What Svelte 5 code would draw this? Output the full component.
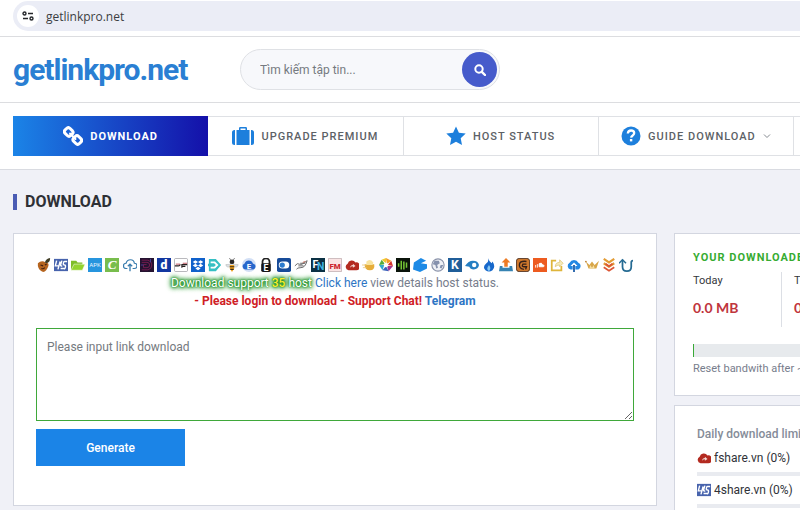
<script lang="ts">
  type Host = { name: string; art: string };

  const font = 'font-family="Roboto, sans-serif" text-anchor="middle"';

  const fshare =
    '<path d="M4 14a4 4 0 0 1-1-7.500a5 5 0 0 1 9-1.500a4.500 4.500 0 0 1 1 9z" fill="#b32a20"/><path d="M6 11q0-3 3-3V6.500l3 2.500l-3 2V9.500q-2 0-3 1.500z" fill="#f3d9d4"/>';
  const fourshare =
    '<path d="M0 1h16v14H0z" fill="#4763ad"/><path d="M3 3L1.500 9H6M7 4L4.500 13M9 3L7.500 8q0 1.500 2 1M15 4h-3q-1 0-1.300 2t1.300 2t1 2.500t-2 1.500H7.500" fill="none" stroke="#fff" stroke-width="1.600"/>';

  const hosts: Host[] = [
    {
      name: 'uploaded fruit',
      art: '<path d="M1 6q4-4 9-1q4 0 3 4q-2 6-6 7q-5-2-6-7z" fill="#b5641f"/><path d="M9 5q1-4 6-5q0 5-4 6z" fill="#3e3b24"/><path d="M4 8l3 1M9 8l2-1M5 12q2 1 4-1" stroke="#462110" stroke-width="1.300" fill="none"/>'
    },
    { name: '4share.vn', art: fourshare },
    {
      name: 'folder',
      art: '<path d="M0 14V3h6l1.500 2H13v2" fill="#7ebd28"/><path d="M0 14L3.500 7H16l-3 7z" fill="#93d32e" stroke="#fff" stroke-width=".6"/>'
    },
    {
      name: 'apk',
      art: `<path d="M0 0h16v16H0z" fill="#2695de"/><text x="8" y="10.500" font-size="7" fill="#e9f6ff" ${font}>APK</text>`
    },
    {
      name: 'clicknupload',
      art: `<path d="M0 0h16v16H0z" fill="#78bd4d"/><text x="8" y="13" font-size="15" font-style="italic" font-weight="700" fill="#fff" font-family="Liberation Serif, serif" text-anchor="middle">C</text>`
    },
    {
      name: 'cloud upload',
      art: '<path d="M5 12H3.500a3 3 0 0 1 0-6q1-4 5-4t4.500 4a3 3 0 0 1 0 6H11" fill="none" stroke="#397cae" stroke-width="1.400"/><path d="M8 15V7M5.500 9.500L8 7l2.500 2.500" fill="none" stroke="#397cae" stroke-width="1.500"/>'
    },
    {
      name: 'ddownload',
      art: '<path d="M0 0h16v16H0z" fill="#241331"/><path d="M2 2.500h7q4.500 1 4.500 5.500t-4.500 5.500H2M2 5h6q3 0 3 3t-3 3H4V7.500h3.500" fill="none" stroke="#7d1d52" stroke-width="1"/><path d="M12 1v4M1 8h3" stroke="#4c45a4"/>'
    },
    {
      name: 'dailyuploads',
      art: `<path d="M0 0h16v16H0z" fill="#1237a0"/><text x="8" y="13" font-size="14" font-weight="900" fill="#fff" ${font}>d</text>`
    },
    {
      name: 'depositfiles',
      art: '<rect x=".5" y=".5" width="15" height="15" rx="1.500" fill="#fff" stroke="#a9a9ae"/><path d="M1 9h4q2 0 2-2M9 11V7.500h6M9 9.500h4" fill="none" stroke="#292020" stroke-width="1.300"/><path d="M2 7h5M10 6h5" stroke="#b3414d"/>'
    },
    {
      name: 'dropbox',
      art: '<path d="M0 0h16v16H0z" fill="#1061cb"/><path d="M5 2.500l3 2l-3 2l-3-2zM11 2.500l3 2l-3 2l-3-2zM5 6.500l3 2l-3 2l-3-2zM11 6.500l3 2l-3 2l-3-2zM8 10l3 2l-3 2l-3-2z" fill="#fff"/>'
    },
    {
      name: 'drop download',
      art: '<path d="M1 1h8l6 7l-6 7H1V9.500H0V6.500h1z" fill="#36bfc3"/><path d="M3 4h5l4 4l-4 4H3v-2h4l2-2l-2-2H3z" fill="#fff"/>'
    },
    {
      name: 'bee',
      art: '<path d="M5 0l2 3M11 0L9 3" stroke="#777"/><circle cx="8" cy="4.500" r="2.700" fill="#292929"/><path d="M7.500 7L1 7.500q0 4 6 2.500M8.500 7L15 7.500q0 4-6 2.500" fill="#dce1e5" stroke="#aaa" stroke-width=".5"/><path d="M5.500 8h5v4L8 16l-2.500-4z" fill="#efa11e"/><path d="M5.500 10h5M6 13h4" stroke="#3a2c17" stroke-width="1.200"/>'
    },
    {
      name: 'elite cloud',
      art: `<circle cx="8" cy="8" r="8" fill="#d2dff5"/><path d="M4 13a3.500 3.500 0 0 1-1-6.800a5 5 0 0 1 9.500 0A3.500 3.500 0 0 1 13 13z" fill="#2767cc"/><text x="8" y="12" font-size="9" font-weight="700" fill="#fff" ${font}>E</text>`
    },
    {
      name: 'lock',
      art: `<path d="M4 8V4a4 3.500 0 0 1 8 0v4" fill="none" stroke="#222" stroke-width="2"/><rect x="2.500" y="6" width="11" height="10" rx="2" fill="#151515"/><text x="8" y="14.500" font-size="10" font-weight="700" fill="#fff" ${font}>E</text>`
    },
    {
      name: 'toggle',
      art: '<rect width="16" height="16" rx="2" fill="#174b99"/><rect x="2" y="4" width="12" height="8" rx="4" fill="#fff"/><circle cx="6" cy="8" r="3" fill="#2d7bce"/>'
    },
    {
      name: 'express',
      art: '<path d="M1 9q3-4 5-2t9-4q-2 8-7 8t-5 2M5 9h6M7 6h6" fill="none" stroke="#666" stroke-width="1.100"/><path d="M10 5l3-1" stroke="#b85240"/>'
    },
    {
      name: 'filenext',
      art: `<path d="M0 0h16v16H0z" fill="#0b3144"/><text x="5" y="11" font-size="12" font-weight="700" fill="#fff" ${font}>F</text><text x="11" y="14" font-size="12" font-weight="700" fill="#41b5e3" ${font}>N</text>`
    },
    {
      name: 'filemonster',
      art: `<path d="M.5 .5h15v15H.500z" fill="#fae4e4" stroke="#c5b2b5"/><text x="8" y="12" font-size="9" font-weight="900" fill="#cd2931" ${font}>FM</text>`
    },
    { name: 'fshare.vn', art: fshare },
    {
      name: 'bread',
      art: '<path d="M3 7h11q1 7-5 7t-6-7z" fill="#e6ad39"/><path d="M5 4q4-4 8 1l-1 3H5z" fill="#f8e4a0"/><path d="M0 8h5M1 11h4" stroke="#e9cc83"/>'
    },
    {
      name: 'colour wheel',
      art: '<path d="M8 0l6 3l-5 4z" fill="#f29a23"/><path d="M14 3l2 6l-6-1z" fill="#d7342d"/><path d="M16 9l-5 6l-2-6z" fill="#a4368f"/><path d="M11 15l-7-1l4-5z" fill="#3a62bb"/><path d="M4 14L0 8l6 0z" fill="#31a7d0"/><path d="M0 8l3-6l4 5z" fill="#54ad3d"/><path d="M3 2l5-2v6z" fill="#efc931"/><circle cx="8" cy="8" r="2.500" fill="#fff"/>'
    },
    {
      name: 'equaliser',
      art: '<path d="M0 0h16v16H0z" fill="#0b140b"/><path d="M3 6v4M6 3v10M9 4v9M12 5v6" stroke="#77c936" stroke-width="1.700"/>'
    },
    {
      name: 'blue box',
      art: '<path d="M1 5l8-5l6 3l-6 3l7 1v5l-8 4l-8-3z" fill="#1d8ae6"/>'
    },
    {
      name: 'globe',
      art: '<circle cx="8" cy="8" r="7" fill="#eef0f5" stroke="#8992a9" stroke-width="1.300"/><path d="M4 3l5 0l1 3l-3 2l1 3l-2 1l-1-4l-3-1zM11 8l3 0l-2 4l-2-1z" fill="#8591ad"/>'
    },
    {
      name: 'katfile',
      art: `<path d="M0 0h16v16H0z" fill="#205e99"/><text x="8" y="13" font-size="14" font-weight="700" fill="#fff" ${font}>K</text>`
    },
    {
      name: 'comet',
      art: '<path d="M0 9q4-6 9-6q6 0 7 5q-1 5-6 5q-4 0-5-3z" fill="#247ec2"/><circle cx="10.500" cy="8" r="2.500" fill="#fff"/>'
    },
    {
      name: 'flame',
      art: '<path d="M7 0q1 4 4 6l1-2q4 6 0 10q-4 3-8 0q-4-4 1-8q3-2 2-6z" fill="#1768cb"/><path d="M8 8q3 4 0 7q-4-2 0-7z" fill="#88c9f5"/>'
    },
    {
      name: 'upload tray',
      art: '<path d="M1 9h3v2h8V9h3l1 6H0z" fill="#3683b2"/><path d="M8 0l5 5h-3v5H6V5H3z" fill="#ed7b24"/>'
    },
    {
      name: 'spiral',
      art: '<rect x=".5" y=".5" width="15" height="15" rx="3" fill="#cf782c" stroke="#492d1d"/><path d="M9 13q-6-1-5-6q1-4 8-3M12 7H8q-2 3 1 3h3l-1 3" fill="none" stroke="#352019" stroke-width="1.600"/>'
    },
    {
      name: 'soundcloud',
      art: '<path d="M0 0h16v16H0z" fill="#ed5b20"/><path d="M7 10V6.500q3-2 4 1.500a1 1 0 0 1 1 2zM5 7v4M3 8v3" fill="#fff" stroke="#fff"/>'
    },
    {
      name: 'note',
      art: '<path d="M1 2h6v2H3v9h9V9h2v6H1z" fill="#dfb53b"/><path d="M6 10q0-5 5-5V2l4 4l-4 4V8q-3 0-5 2z" fill="#f6eab9" stroke="#d8ba60" stroke-width=".7"/>'
    },
    {
      name: 'cloud arrow',
      art: '<path d="M4 13a4 4 0 0 1-1-7.500a5.500 5.500 0 0 1 10 0a4 4 0 0 1 0 7.500z" fill="#2388e3"/><path d="M8 5l4 4H9.500v6h-3V9H4z" fill="#fff"/><path d="M8 8v8" stroke="#1759a4" stroke-width="2"/>'
    },
    {
      name: 'crown',
      art: '<path d="M1 4l4 4l3-4l3 4l5-5l-3 9H4z" fill="#d8a649"/><path d="M5 12l1-4l2 3l2-3l1 4z" fill="#f4dda2"/><circle cx="1" cy="4" r="1" fill="#bb7f30"/>'
    },
    {
      name: 'chevrons',
      art: '<path d="M2 1l6 4l6-4M2 6l6 4l6-4" fill="none" stroke="#e39c35" stroke-width="2.500"/><path d="M2 10.500l6 4l6-4M4 6.500l4 3l4-3" fill="none" stroke="#dc5635" stroke-width="2"/>'
    },
    {
      name: 'return',
      art: '<path d="M4 2v8q0 5 5 5t5-5V5q0-2 2-2" fill="none" stroke="#266b93" stroke-width="2"/><path d="M0 6l4-4l4 4" fill="none" stroke="#266b93" stroke-width="1.700"/>'
    }
  ];

  const limits = [
    { name: 'fshare.vn', used: 0, art: fshare },
    { name: '4share.vn', used: 0, art: fourshare }
  ];

  const totals = [
    { label: 'Today', value: '0.0 MB' },
    { label: 'Total', value: '0.0 MB' }
  ];

  let query = $state('');
  let links = $state('');
</script>

<div class="page">
  <div class="browser">
    <div class="address">
      <span class="site-info">
        <svg width="12" height="10" viewBox="0 0 12 10" fill="none" stroke="#25272b" aria-hidden="true">
          <circle cx="2.5" cy="2.500" r="1.500" stroke-width="1.400" />
          <path d="M6 2.500h5M1 7.500h5" stroke-width="1.500" />
          <circle cx="9.500" cy="7.500" r="1.500" stroke-width="1.400" />
        </svg>
      </span>
      <span>getlinkpro.net</span>
    </div>
  </div>

  <header>
    <a class="brand" href="#home">getlinkpro.net</a>
    <form class="search" onsubmit={(e) => e.preventDefault()}>
      <input type="text" aria-label="Tìm kiếm tập tin" placeholder="Tìm kiếm tập tin..." bind:value={query} />
      <button type="submit" aria-label="Search">
        <svg width="12" height="12" viewBox="0 0 12 12" fill="none" stroke="#fff" aria-hidden="true">
          <circle cx="5" cy="5" r="3.700" stroke-width="2" />
          <path d="M7.800 7.800l3.200 3.200" stroke-width="2.400" stroke-linecap="round" />
        </svg>
      </button>
    </form>
  </header>

  <div class="nav-wrap">
    <nav>
      <a class="active" href="#download">
        <svg width="20" height="20" viewBox="0 0 20 20" fill="none" stroke="#fff" stroke-width="3" aria-hidden="true">
          <rect x="1.700" y="2.500" width="8" height="7" rx="2.500" transform="rotate(45 5.700 6)" />
          <rect x="10.300" y="10.500" width="8" height="7" rx="2.500" transform="rotate(45 14.300 14)" />
          <path d="M7 7.500l5.500 5.500" stroke-width="2" stroke-linecap="round" />
        </svg>
        Download
      </a>
      <a href="#premium">
        <svg width="22" height="20" viewBox="0 0 22 20" fill="#1d7fdc" aria-hidden="true">
          <path d="M3 4v15H2.500Q0 19 0 16.500V6.500Q0 4 2.500 4zM19 4h.5Q22 4 22 6.500v10q0 2.500-2.500 2.500H19z" />
          <path d="M4.500 4H7V2.200Q7 1 8.200 1h5.600Q15 1 15 2.200V4h2.500v15h-13zM8.500 4h5V2.500h-5z" fill-rule="evenodd" />
        </svg>
        Upgrade Premium
      </a>
      <a href="#status">
        <svg width="20" height="20" viewBox="0 0 20 20" fill="#1d7fdc" aria-hidden="true">
          <path d="M10 .5l2.900 6.300l6.800.8l-5 4.700l1.300 6.800L10 15.800l-6 3.300l1.300-6.800l-5-4.700l6.800-.8z" />
        </svg>
        Host Status
      </a>
      <a href="#guide">
        <svg width="20" height="20" viewBox="0 0 20 20" aria-hidden="true">
          <circle cx="10" cy="10" r="9.500" fill="#1d7fdc" />
          <path d="M6.800 7.500q.3-3 3.300-3t3.100 2.600q0 1.400-1.500 2.300t-1.600 2.300" fill="none" stroke="#fff" stroke-width="2.300" />
          <path d="M8.900 13h2.400v2.400H8.900z" fill="#fff" />
        </svg>
        Guide Download
        <svg class="caret" width="8" height="6" viewBox="0 0 8 6" fill="none" stroke="#858a90" aria-hidden="true">
          <path d="M1 1.500l3 3l3-3" />
        </svg>
      </a>
      <span class="more"></span>
    </nav>
  </div>

  <h1>Download</h1>

  <div class="layout">
    <main class="card">
      <div class="hosts">
        {#each hosts as host}
          <svg width="14" height="14" viewBox="0 0 16 16" role="img" aria-label={host.name}>{@html host.art}</svg>
        {/each}
      </div>
      <p class="support">
        <span class="glow">Download support <b>35</b> host</span>
        <a href="#status">Click here</a> view details host status.
      </p>
      <p class="notice">- Please login to download - Support Chat! <a href="#telegram">Telegram</a></p>
      <textarea aria-label="Link download" placeholder="Please input link download" bind:value={links}></textarea>
      <button class="generate" type="button">Generate</button>
    </main>

    <aside>
      <section class="card usage">
        <h2>Your downloaded</h2>
        <div class="totals">
          {#each totals as total}
            <div class="total">
              <span>{total.label}</span>
              <strong>{total.value}</strong>
            </div>
          {/each}
        </div>
        <div class="bandwidth"></div>
        <p>Reset bandwith after ~ 24h</p>
      </section>

      <section class="card limits">
        <h3>Daily download limit</h3>
        {#each limits as limit}
          <div class="limit">
            <svg width="14" height="14" viewBox="0 0 16 16" aria-hidden="true">{@html limit.art}</svg>
            {limit.name} ({limit.used}%)
          </div>
          <div class="track"><div class="fill" style="width: {limit.used}%"></div></div>
        {/each}
      </section>
    </aside>
  </div>
</div>

<style>
  :global(body) {
    margin: 0;
    background: #f0f1f7;
  }

  .page {
    display: flex;
    flex-direction: column;
    min-height: 100vh;
    overflow: hidden;
    font-family: Roboto, sans-serif;
    font-size: 12px;
    color: #777d8c;
  }

  .page * {
    box-sizing: border-box;
  }

  a {
    color: #2d75c4;
    text-decoration: none;
  }

  h1,
  h2,
  h3,
  p {
    margin: 0;
  }

  .browser {
    padding: 1px 0 5px 13px;
    background: #fff;
    border-bottom: 1px solid #dcdde0;
  }

  .address {
    display: flex;
    align-items: center;
    gap: 7px;
    height: 30px;
    padding-left: 4px;
    border-radius: 15px 0 0 15px;
    background: #ebedf6;
    color: #3b3d42;
    font: 12px 'Open Sans', sans-serif;
  }

  .site-info {
    display: grid;
    place-items: center;
    width: 22px;
    height: 22px;
    border-radius: 50%;
    background: #fff;
  }

  header {
    display: flex;
    align-items: center;
    height: 66px;
    padding-left: 13px;
    background: #fff;
    border-bottom: 1px solid #dcdde0;
  }

  .brand {
    width: 227px;
    color: #2a7fd3;
    font-size: 30px;
    font-weight: 700;
    letter-spacing: -1px;
  }

  .search {
    display: flex;
    align-items: center;
    width: 260px;
    height: 41px;
    padding-right: 2px;
    border: 1px solid #dfe1e5;
    border-radius: 21px;
    background: #f7f8fb;
  }

  .search input {
    flex: 1;
    min-width: 0;
    padding: 0 0 0 19px;
    border: 0;
    outline: 0;
    background: none;
    font: 12px Roboto, sans-serif;
  }

  .search input::placeholder,
  textarea::placeholder {
    color: #757a80;
    opacity: 1;
  }

  .search button {
    display: grid;
    place-items: center;
    width: 35px;
    height: 35px;
    padding: 0;
    border: 0;
    border-radius: 50%;
    background: #465bcb;
  }

  .nav-wrap {
    padding: 13px 0 13px 13px;
    background: #fff;
    border-bottom: 1px solid #d9dbe1;
  }

  nav {
    display: grid;
    grid-template-columns: repeat(4, 1fr) 6px;
    height: 40px;
  }

  nav a {
    display: flex;
    align-items: center;
    justify-content: center;
    gap: 7px;
    border: 1px solid #dfe1e5;
    border-left: 0;
    color: #5c6166;
    font-size: 11px;
    font-weight: 500;
    letter-spacing: 1px;
    text-transform: uppercase;
    white-space: nowrap;
  }

  nav a.active {
    border: 0;
    background: linear-gradient(90deg, #1b84e7, #1410a9);
    color: #fff;
    font-weight: 700;
  }

  .more {
    border: 1px solid #dfe1e5;
    border-width: 1px 0;
  }

  h1 {
    margin: 24px 13px 23px;
    padding-left: 8px;
    border-left: 4px solid #4a5cb4;
    color: #2e3035;
    font-size: 16px;
    font-weight: 700;
    line-height: 16px;
    text-transform: uppercase;
  }

  .layout {
    display: grid;
    flex: 1;
    grid-template-columns: minmax(0, 1fr) 126px;
    gap: 17px;
    padding-left: 13px;
  }

  .card {
    background: #fff;
    border: 1px solid #d3d6e0;
  }

  main {
    align-self: start;
    padding: 22px 22px 39px;
    text-align: center;
  }

  .hosts {
    display: flex;
    justify-content: space-between;
    padding: 2px 1px;
  }

  .hosts svg {
    display: block;
  }

  .support,
  .notice {
    line-height: 18px;
  }

  .glow {
    color: #fff;
    text-shadow:
      0 0 1px #148c1b,
      0 0 3px #148c1b,
      0 0 4px #148c1b,
      0 0 5px #148c1b,
      0 0 6px #148c1b;
  }

  .glow b {
    color: #ffef2e;
    font-weight: 500;
  }

  .notice {
    color: #cf2025;
    font-weight: 700;
  }

  textarea {
    display: block;
    width: 100%;
    height: 93px;
    margin: 18px 0 8px;
    padding: 11px 10px;
    border: 1px solid #3fa83a;
    outline: 0;
    font: 12px Roboto, sans-serif;
    resize: both;
  }

  .generate {
    display: block;
    width: 149px;
    height: 37px;
    border: 0;
    background: #1b84e7;
    color: #fff;
    font: 500 12px Roboto, sans-serif;
  }

  aside {
    display: flex;
    flex-direction: column;
    gap: 9px;
    overflow: hidden;
    white-space: nowrap;
  }

  aside .card {
    border-right: 0;
    overflow: hidden;
  }

  .usage {
    padding: 16px 0 18px 18px;
  }

  h2 {
    color: #36ac32;
    font-size: 11px;
    font-weight: 700;
    letter-spacing: 1px;
    line-height: 16px;
    text-transform: uppercase;
  }

  .totals {
    display: flex;
    margin: 6px 0 17px;
  }

  .total {
    display: flex;
    flex: none;
    flex-direction: column;
    gap: 10px;
    width: 89px;
    height: 55px;
    color: #35373d;
    font-size: 11px;
    line-height: 18px;
    border-right: 1px solid #dcdfe5;
  }

  .total + .total {
    padding-left: 12px;
  }

  .total strong {
    color: #c0353d;
    font: 700 14px/16px Lato, sans-serif;
  }

  .bandwidth {
    height: 13px;
    border-left: 1px solid #38a936;
    background: #e7eaed;
  }

  .usage p {
    margin-top: 4px;
    font-size: 11px;
    line-height: 16px;
  }

  .limits {
    flex: 1;
    padding: 20px 0 3px 22px;
    border-bottom: 0;
  }

  h3 {
    margin-bottom: 6px;
    color: #858c99;
    font-size: 12px;
    font-weight: 500;
    line-height: 16px;
  }

  .limit {
    display: flex;
    align-items: center;
    gap: 3px;
    height: 20px;
    color: #303238;
  }

  .track {
    height: 4px;
    margin: 4px 0;
    background: #e9ebf0;
  }

  .fill {
    height: 4px;
    background: #38a936;
  }
</style>
